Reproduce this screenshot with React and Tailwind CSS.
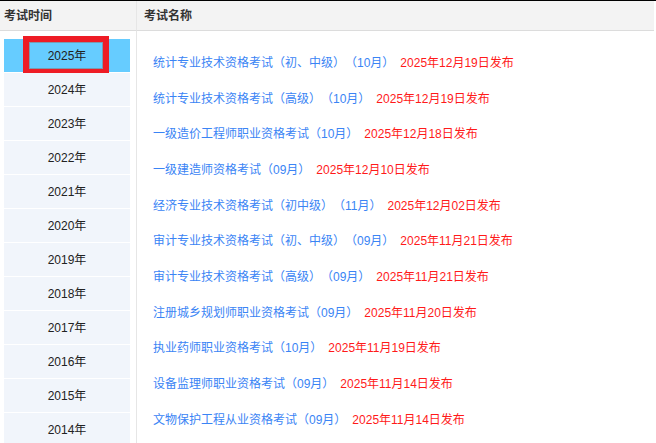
import React from "react";

const years = ["2025","2024","2023","2022","2021","2020","2019","2018","2017","2016","2015","2014"];
const exams = [
  ["统计专业技术资格考试（初、中级）（10月）", "2025年12月19日发布"],
  ["统计专业技术资格考试（高级）（10月）", "2025年12月19日发布"],
  ["一级造价工程师职业资格考试（10月）", "2025年12月18日发布"],
  ["一级建造师资格考试（09月）", "2025年12月10日发布"],
  ["经济专业技术资格考试（初中级）（11月）", "2025年12月02日发布"],
  ["审计专业技术资格考试（初、中级）（09月）", "2025年11月21日发布"],
  ["审计专业技术资格考试（高级）（09月）", "2025年11月21日发布"],
  ["注册城乡规划师职业资格考试（09月）", "2025年11月20日发布"],
  ["执业药师职业资格考试（10月）", "2025年11月19日发布"],
  ["设备监理师职业资格考试（09月）", "2025年11月14日发布"],
  ["文物保护工程从业资格考试（09月）", "2025年11月14日发布"],
];

export default function App() {
  return (
    <div
      className="w-[656px] h-[443px] overflow-hidden bg-white border-t border-black text-[12px] [text-spacing-trim:space-all]"
      style={{ fontFamily: '"Liberation Sans", "Noto Sans CJK SC", sans-serif' }}
    >
      <div className="grid grid-cols-[137px_517px] h-full">
        <div className="h-[30px] bg-[#f3f3f3] border-b border-[#dcdcdc] border-r border-r-[#e6e6e6] flex items-center pl-[4px] font-bold text-[#333]">
          考试时间
        </div>
        <div className="h-[30px] bg-[#f3f3f3] border-b border-[#dcdcdc] flex items-center pl-[7px] font-bold text-[#333]">
          考试名称
        </div>
        <div className="border-r border-[#e6e6e6] pt-[8px] pl-[4px] pr-[6px] flex flex-col gap-px">
          {years.map((y, i) => (
            <div
              key={y}
              className={
                "relative h-[33px] shrink-0 flex items-center justify-center text-[#222] " +
                (i === 0 ? "bg-[#66ccff]" : "bg-[#f1f5fb]")
              }
            >
              {y}年
              {i === 0 && (
                <div className="absolute left-[19px] top-[-3px] w-[86px] h-[39px] border-[6px] border-[#ee1c25]">
                  <div className="w-full h-full border border-[#7a9ab0]" />
                </div>
              )}
            </div>
          ))}
        </div>
        <div className="pt-[14px] pl-[16px]">
          {exams.map(([name, date]) => (
            <div key={name} className="h-[35.7px] flex items-center whitespace-nowrap">
              <span className="text-[#3a84f5]">{name}</span>
              <span className="ml-[6px] text-[#ff1a1a]">{date}</span>
            </div>
          ))}
        </div>
      </div>
    </div>
  );
}
